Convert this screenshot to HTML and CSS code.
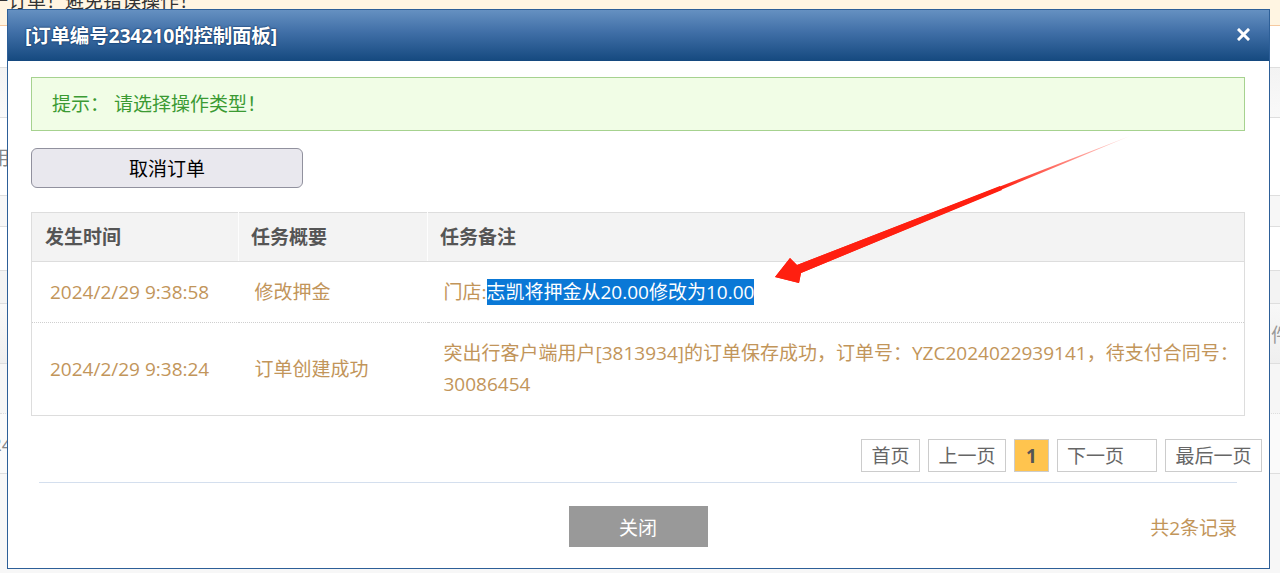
FILE: index.html
```html
<!DOCTYPE html>
<html lang="zh-CN">
<head>
<meta charset="utf-8">
<title>订单控制面板</title>
<link rel="stylesheet" href="styles.css">
</head>
<body>
<div class="page">
  <div class="notice"><span class="notice-text">一订单！避免错误操作！</span></div>
  <div class="bg-rows">
    <div class="bg-row r1"></div>
    <div class="bg-row r2"></div>
    <div class="bg-row r3"><span class="bg-left">用</span></div>
    <div class="bg-row r4"></div>
    <div class="bg-row r5"></div>
    <div class="bg-row r6"></div>
    <div class="bg-row r7"><span class="bg-left"></span><span class="bg-right">件</span></div>
    <div class="bg-row r8"></div>
    <div class="bg-row r9"><span class="bg-left">24</span></div>
    <div class="bg-row r10"></div>
  </div>
</div>

<div class="modal">
  <div class="modal-header">
    <h1 class="modal-title">[订单编号234210的控制面板]</h1>
    <span class="modal-close" aria-label="关闭">
      <svg width="13" height="13" viewBox="0 0 13 13"><path d="M2 2 L11 11 M11 2 L2 11" stroke="#fff" stroke-width="3" stroke-linecap="square"/></svg>
    </span>
  </div>
  <div class="modal-body">
    <div class="alert"><span class="alert-label">提示：</span><span>请选择操作类型！</span></div>
    <button class="btn-action" type="button">取消订单</button>
    <table class="log-table">
      <colgroup><col class="c1"><col class="c2"><col class="c3"></colgroup>
      <thead>
        <tr><th>发生时间</th><th>任务概要</th><th>任务备注</th></tr>
      </thead>
      <tbody>
        <tr class="row-dotted">
          <td>2024/2/29 9:38:58</td>
          <td>修改押金</td>
          <td>门店:<span class="selected">志凯将押金从20.00修改为10.00</span></td>
        </tr>
        <tr class="row-tall">
          <td>2024/2/29 9:38:24</td>
          <td>订单创建成功</td>
          <td>突出行客户端用户[3813934]的订单保存成功，订单号：YZC2024022939141，待支付合同号：30086454</td>
        </tr>
      </tbody>
    </table>
    <div class="pager">
      <span class="pg">首页</span>
      <span class="pg">上一页</span>
      <span class="pg pg-current">1</span>
      <span class="pg pg-next">下一页</span>
      <span class="pg">最后一页</span>
    </div>
  </div>
  <div class="modal-sep"></div>
  <div class="modal-footer">
    <span></span>
    <button class="btn-close" type="button">关闭</button>
    <span class="total">共2条记录</span>
  </div>
</div>

<svg class="arrow" width="1280" height="573" viewBox="0 0 1280 573">
  <defs>
    <linearGradient id="fade" x1="1130" y1="136" x2="1000" y2="188" gradientUnits="userSpaceOnUse">
      <stop offset="0" stop-color="#ff2a1a" stop-opacity="0.15"/>
      <stop offset="1" stop-color="#ff1f10" stop-opacity="1"/>
    </linearGradient>
  </defs>
  <path d="M775 277 L790 258 L797 265 L1130 136 L801 273 L799 283 Z" fill="url(#fade)"/>
  <path d="M775 277 L790 258 L797 265 L1000 186 L1002 190 L801 273 L799 283 Z" fill="#ff1f10"/>
</svg>
</body>
</html>
```

FILE: styles.css
```css
* { box-sizing: border-box; }

html, body {
  margin: 0;
  padding: 0;
}

body {
  width: 1280px;
  height: 573px;
  overflow: hidden;
  position: relative;
  font-family: "Open Sans", "Noto Sans CJK SC", sans-serif;
  font-size: 19px;
  background: #f5f5f5;
}

/* ---------- background page ---------- */
.page {
  width: 1280px;
}

.notice {
  height: 26px;
  background: #fff5e2;
  border-bottom: 1px solid #f6caa0;
  overflow: hidden;
  color: #333;
}

.notice-text {
  display: block;
  margin-top: -11px;
  margin-left: -11px;
  line-height: 24px;
}

.bg-rows {
  display: flex;
  flex-direction: column;
}

.bg-row {
  display: flex;
  justify-content: space-between;
  align-items: center;
  border-bottom: 1px solid #dedede;
  color: #888;
  overflow: hidden;
  flex: none;
}

.bg-left { margin-left: -9px; }
.bg-right { margin-right: -10px; color: #999; }

.r1 { height: 42px; background: #fff; }
.r2 { height: 50px; background: linear-gradient(#f3f3f3, #f9f9f9); }
.r3 { height: 78px; background: #fff; }
.r4 { height: 31px; background: #f7f7f7; }
.r5 { height: 44px; background: #fff; }
.r6 { height: 33px; background: #f3f3f3; }
.r7 { height: 60px; background: linear-gradient(#f8f8f8, #efefef); }
.r8 { height: 50px; background: #f6f6f6; border-bottom-style: dotted; }
.r9 { height: 60px; background: #fafafa; }
.r10 { height: 100px; background: #f7f7f7; }

/* ---------- modal ---------- */
.modal {
  position: absolute;
  left: 7px;
  top: 9px;
  width: 1263px;
  height: 560px;
  background: #fff;
  border: 1px solid #2d5f98;
  display: flex;
  flex-direction: column;
}

.modal-header {
  height: 51px;
  flex: none;
  background: linear-gradient(#6590c1, #3f6ea6 45%, #15497f);
  display: flex;
  align-items: center;
  justify-content: space-between;
  padding: 0 19px 0 17px;
}

.modal-title {
  margin: 0;
  font-size: 19.5px;
  font-weight: bold;
  color: #fff;
  letter-spacing: -0.2px;
  text-shadow: 0 0 2px #0b2f5c, 0 0 1px #0b2f5c;
  line-height: 24px;
  padding-top: 1px;
}

.modal-close {
  display: flex;
  width: 13px;
  height: 13px;
  margin-bottom: 3px;
}

.modal-body {
  padding: 16px 24px 0 23px;
  display: flex;
  flex-direction: column;
  align-items: flex-start;
}

.alert {
  width: 100%;
  height: 54px;
  background: #f1fde6;
  border: 1px solid #a6d28f;
  color: #3b9a33;
  display: flex;
  align-items: center;
  padding-left: 20px;
  line-height: 24px;
}

.alert-label { margin-right: 5px; }

.btn-action {
  margin-top: 17px;
  width: 272px;
  height: 40px;
  background: #e9e8ee;
  border: 1px solid #91919e;
  border-radius: 6px;
  font-family: inherit;
  font-size: 19px;
  color: #000;
  padding: 0;
}

.log-table {
  margin-top: 24px;
  width: 100%;
  border-collapse: collapse;
  border: 1px solid #dddddd;
  table-layout: fixed;
}

.c1 { width: 207px; }
.c2 { width: 189px; }

.log-table th {
  background: #f3f3f3;
  color: #555555;
  font-weight: bold;
  text-align: left;
  padding: 9px 12px;
  line-height: 30px;
  border-bottom: 1px solid #dddddd;
  border-left: 1px solid #fdfdfd;
}

.log-table th:first-child { border-left: none; padding-left: 13px; }

.log-table td {
  color: #c2955a;
  padding: 15px 16px 14px;
  line-height: 31px;
  vertical-align: middle;
}

.row-tall td { padding-top: 15px; padding-bottom: 15px; }

.log-table td:first-child { padding-left: 18px; }
.log-table td:last-child { padding-right: 2px; }

.row-dotted td { border-bottom: 1px dotted #cfcfcf; }

.selected {
  background: #0a78d6;
  color: #fff;
}

.pager {
  align-self: flex-end;
  margin-right: -17px;
  margin-top: 23px;
  display: flex;
  gap: 8px;
}

.pg {
  height: 33px;
  border: 1px solid #cccccc;
  color: #666;
  padding: 0 9.5px;
  display: flex;
  align-items: center;
  justify-content: center;
  line-height: 24px;
  background: #fff;
}

.pg-current {
  width: 35px;
  padding: 0;
  background: #ffc44e;
  color: #555;
  font-weight: bold;
}

.pg-next {
  width: 100px;
  padding-left: 9px;
  justify-content: flex-start;
}

.modal-sep {
  margin: 10px 32px 0 31px;
  height: 1px;
  background: #d4dfee;
}

.modal-footer {
  margin-top: 23px;
  padding: 0 32px 0 31px;
  display: grid;
  grid-template-columns: 1fr auto 1fr;
  align-items: center;
}

.btn-close {
  width: 139px;
  height: 41px;
  background: #999999;
  border: none;
  color: #fff;
  font-family: inherit;
  font-size: 19px;
  padding: 0;
}

.total {
  justify-self: end;
  color: #c2955a;
}

.arrow {
  position: absolute;
  left: 0;
  top: 0;
  pointer-events: none;
}
```
